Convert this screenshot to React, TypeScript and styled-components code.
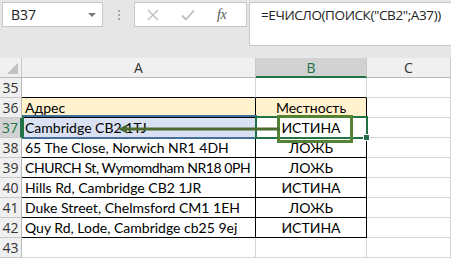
import { Fragment } from "react";
import styled, { createGlobalStyle } from "styled-components";

const GlobalStyle = createGlobalStyle`
  html, body {
    margin: 0;
    padding: 0;
    background: #ffffff;
    overflow: hidden;
  }
`;

const Page = styled.div`
  width: 451px;
  height: 260px;
  overflow: hidden;
  background: #ffffff;
`;

const Toolbar = styled.div`
  height: 58px;
  box-sizing: border-box;
  padding: 2px 0 0 2px;
  background: #e6e6e6;
  display: flex;
  align-items: flex-start;
`;

const NameBox = styled.div`
  width: 101px;
  height: 25px;
  box-sizing: border-box;
  background: #ffffff;
  border: 1px solid #c6c6c6;
  display: flex;
  align-items: center;
  justify-content: space-between;
  padding: 0 6px 0 8px;
  font-family: "Open Sans", "Noto Sans", sans-serif;
  font-size: 14px;
  color: #222;
`;

const Caret = styled.span`
  width: 0;
  height: 0;
  border-left: 4px solid transparent;
  border-right: 4px solid transparent;
  border-top: 4px solid #7a7a7a;
`;

const Grip = styled.div`
  width: 31px;
  height: 25px;
  display: flex;
  flex-direction: column;
  align-items: center;
  justify-content: center;
  gap: 2px;

  span {
    width: 2px;
    height: 2px;
    background: #a8a8a8;
  }
`;

const Buttons = styled.div`
  width: 113px;
  height: 25px;
  box-sizing: border-box;
  background: #ffffff;
  border: 1px solid #c6c6c6;
  display: flex;
  align-items: center;
  padding-left: 12px;
  gap: 22px;
`;

const Fx = styled.span`
  font-family: "Liberation Serif", serif;
  font-style: italic;
  font-size: 14px;
  color: #555;
  letter-spacing: -0.5px;
`;

const FormulaInput = styled.div`
  flex: 1;
  height: 44px;
  margin-left: 2px;
  box-sizing: border-box;
  background: #ffffff;
  border: 1px solid #c6c6c6;
  border-right: none;
  padding: 3px 0 0 11px;
  font-family: "Open Sans", "Noto Sans", sans-serif;
  font-size: 13.5px;
  letter-spacing: -0.4px;
  color: #222;
  white-space: nowrap;
`;

const Sheet = styled.div`
  position: relative;
  display: grid;
  grid-template-columns: 22px 234px 111px 84px;
  grid-auto-rows: 20px;
  font-family: Lato, "Noto Sans", sans-serif;
  font-size: 14px;
  color: #000;
`;

const Head = styled.div<{ $active?: boolean }>`
  box-sizing: border-box;
  background: ${(p) => (p.$active ? "#d2d2d2" : "#f0f0f0")};
  border-right: 1px solid #c8c8c8;
  border-bottom: ${(p) => (p.$active ? "2px solid #217346" : "1px solid #b8b8b8")};
  color: ${(p) => (p.$active ? "#217346" : "#333")};
  display: flex;
  align-items: center;
  justify-content: center;
  font-family: "Open Sans", "Noto Sans", sans-serif;
  font-size: 14px;
`;

const Corner = styled(Head)`
  position: relative;
  &::after {
    content: "";
    position: absolute;
    right: 3px;
    bottom: 3px;
    border-left: 11px solid transparent;
    border-bottom: 11px solid #c0c0c0;
  }
`;

const RowHead = styled.div<{ $active?: boolean }>`
  box-sizing: border-box;
  background: ${(p) => (p.$active ? "#d2d2d2" : "#f0f0f0")};
  border-right: ${(p) => (p.$active ? "2px solid #217346" : "1px solid #b8b8b8")};
  border-bottom: 1px solid #c8c8c8;
  color: ${(p) => (p.$active ? "#217346" : "#333")};
  display: flex;
  align-items: center;
  justify-content: center;
  font-family: "Open Sans", "Noto Sans", sans-serif;
  font-size: 14px;
`;

const Cell = styled.div<{
  $bg?: string;
  $center?: boolean;
  $table?: boolean;
  $tableTop?: boolean;
  $tight?: boolean;
}>`
  box-sizing: border-box;
  background: ${(p) => p.$bg || "#ffffff"};
  border-right: 1px solid ${(p) => (p.$table ? "#000" : "#d4d4d4")};
  border-bottom: 1px solid ${(p) => (p.$table || p.$tableTop ? "#000" : "#d4d4d4")};
  display: flex;
  align-items: center;
  justify-content: ${(p) => (p.$center ? "center" : "flex-start")};
  padding-left: ${(p) => (p.$center ? "0" : "3px")};
  letter-spacing: ${(p) => (p.$tight ? "-0.45px" : "0")};
  white-space: nowrap;
  overflow: hidden;
`;

const BlueBox = styled.div`
  position: absolute;
  left: 22px;
  top: 57px;
  width: 235px;
  height: 24px;
  box-sizing: border-box;
  border: 2px solid #43719c;
  border-left-color: #217346;
`;

const Selection = styled.div`
  position: absolute;
  left: 255px;
  top: 58px;
  width: 113px;
  height: 23px;
  box-sizing: border-box;
  border: 2px solid #217346;

  &::after {
    content: "";
    position: absolute;
    right: -4px;
    bottom: -4px;
    width: 5px;
    height: 5px;
    background: #217346;
    border: 1px solid #ffffff;
  }
`;

const Highlight = styled.div`
  position: absolute;
  left: 277px;
  top: 57px;
  width: 76px;
  height: 28px;
  box-sizing: border-box;
  border: 3px solid #548235;
`;

const Arrow = styled.svg`
  position: absolute;
  left: 116px;
  top: 66px;
  overflow: visible;
`;

const rows = [
  { n: 38, a: "65 The Close, Norwich NR1 4DH", b: "ЛОЖЬ" },
  { n: 39, a: "CHURCH St, Wymomdham NR18 0PH", b: "ЛОЖЬ", tight: true },
  { n: 40, a: "Hills Rd, Cambridge CB2 1JR", b: "ИСТИНА" },
  { n: 41, a: "Duke Street, Chelmsford CM1 1EH", b: "ЛОЖЬ" },
  { n: 42, a: "Quy Rd, Lode, Cambridge cb25 9ej", b: "ИСТИНА" },
];

export default function App() {
  return (
    <Page>
      <GlobalStyle />
      <Toolbar>
        <NameBox>
          B37
          <Caret />
        </NameBox>
        <Grip>
          <span />
          <span />
          <span />
        </Grip>
        <Buttons>
          <svg width="12" height="12" viewBox="0 0 12 12">
            <path d="M1 1 L11 11 M11 1 L1 11" stroke="#bdbdbd" strokeWidth="1.4" fill="none" />
          </svg>
          <svg width="14" height="12" viewBox="0 0 14 12">
            <path d="M1 6.5 L5 10.5 L13 1.5" stroke="#bdbdbd" strokeWidth="1.8" fill="none" />
          </svg>
          <Fx>fx</Fx>
        </Buttons>
        <FormulaInput>=ЕЧИСЛО(ПОИСК("СВ2";А37))</FormulaInput>
      </Toolbar>

      <Sheet>
        <Corner />
        <Head>A</Head>
        <Head $active>B</Head>
        <Head>C</Head>

        <RowHead>35</RowHead>
        <Cell $tableTop />
        <Cell $tableTop />
        <Cell />

        <RowHead>36</RowHead>
        <Cell $table $bg="#fff2cc">Адрес</Cell>
        <Cell $table $bg="#fff2cc" $center>
          Местность
        </Cell>
        <Cell />

        <RowHead $active>37</RowHead>
        <Cell $table $bg="#d9e1f2">Cambridge CB2 1TJ</Cell>
        <Cell $table $center>
          ИСТИНА
        </Cell>
        <Cell />

        {rows.map((r) => (
          <Fragment key={r.n}>
            <RowHead>{r.n}</RowHead>
            <Cell $table $tight={r.tight}>
              {r.a}
            </Cell>
            <Cell $table $center>
              {r.b}
            </Cell>
            <Cell />
          </Fragment>
        ))}

        <RowHead>43</RowHead>
        <Cell />
        <Cell />
        <Cell />

        <BlueBox />
        <Selection />
        <Highlight />
        <Arrow width="166" height="10" viewBox="0 0 166 10">
          <path d="M9 5 L164 5" stroke="#4a6a2e" strokeWidth="3" />
          <path d="M2 5 L11 0.5 L11 9.5 Z" fill="#4a6a2e" />
        </Arrow>
      </Sheet>
    </Page>
  );
}
